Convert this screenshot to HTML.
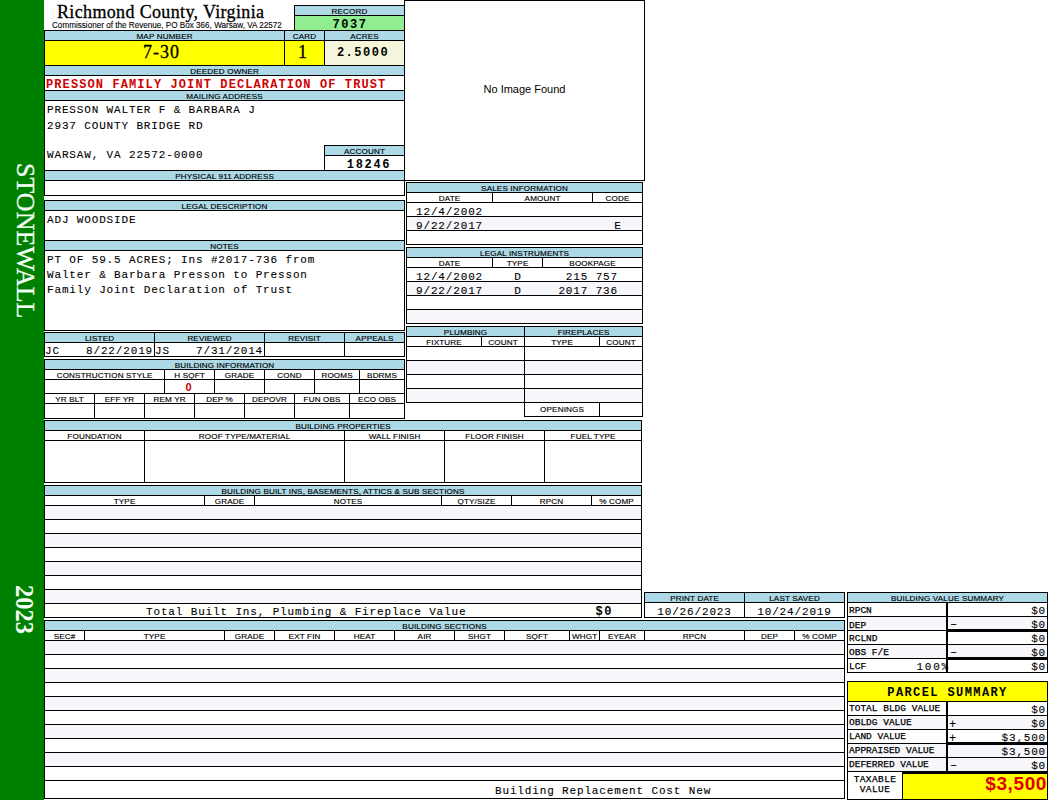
<!DOCTYPE html>
<html><head><meta charset="utf-8"><style>
html,body{margin:0;padding:0;background:#fff;width:1050px;height:800px;overflow:hidden}
#r{position:relative;width:1050px;height:800px;overflow:hidden}
#r div{position:absolute;box-sizing:border-box}
.vt{color:#f4fff4;font-family:"Liberation Serif", serif;white-space:pre}
</style></head><body><div id="r">
<div style="left:0px;top:0px;width:44px;height:800px;background:#008000"></div>
<div style="left:57px;top:2.92px;width:343px;height:18px;line-height:18px;font-family:'Liberation Serif', serif;font-size:18px;text-align:left;white-space:pre;color:#000;letter-spacing:0.35px;-webkit-text-stroke:0.3px #000">Richmond County, Virginia</div>
<div style="left:52px;top:22.10px;width:348px;height:8.15px;line-height:8.15px;font-family:'Liberation Sans', sans-serif;font-size:8.15px;text-align:left;white-space:pre;color:#000;-webkit-text-stroke:0.1px #000">Commissioner of the Revenue, PO Box 366, Warsaw, VA 22572</div>
<div style="left:295px;top:6px;width:109px;height:9px;background:#add8e6"></div>
<div style="left:295px;top:16px;width:109px;height:14px;background:#90ee90"></div>
<div style="left:294px;top:5px;width:111px;height:1px;background:#000"></div>
<div style="left:294px;top:15px;width:111px;height:1px;background:#000"></div>
<div style="left:294px;top:5px;width:1px;height:26px;background:#000"></div>
<div style="left:294px;top:7.54px;width:111px;height:8.1px;line-height:8.1px;font-family:'Liberation Sans', sans-serif;font-size:8.1px;text-align:center;white-space:pre;color:#000;letter-spacing:0.15px;-webkit-text-stroke:0.15px #000;text-indent:0.15px">RECORD</div>
<div style="left:295px;top:19.30px;width:110px;height:12px;line-height:12px;font-family:'Liberation Mono', monospace;font-size:12px;text-align:center;white-space:pre;color:#000;font-weight:bold;letter-spacing:1.6px">7037</div>
<div style="left:45px;top:31px;width:359px;height:9px;background:#add8e6"></div>
<div style="left:45px;top:41px;width:279px;height:24px;background:#ffff00"></div>
<div style="left:325px;top:41px;width:79px;height:24px;background:#f5f5dc"></div>
<div style="left:44px;top:30px;width:361px;height:1px;background:#000"></div>
<div style="left:44px;top:40px;width:361px;height:1px;background:#000"></div>
<div style="left:44px;top:65px;width:361px;height:1px;background:#000"></div>
<div style="left:284px;top:30px;width:1px;height:36px;background:#000"></div>
<div style="left:324px;top:30px;width:1px;height:36px;background:#000"></div>
<div style="left:44px;top:32.54px;width:241px;height:8.1px;line-height:8.1px;font-family:'Liberation Sans', sans-serif;font-size:8.1px;text-align:center;white-space:pre;color:#000;letter-spacing:0.15px;-webkit-text-stroke:0.15px #000;text-indent:0.15px">MAP NUMBER</div>
<div style="left:284px;top:32.54px;width:41px;height:8.1px;line-height:8.1px;font-family:'Liberation Sans', sans-serif;font-size:8.1px;text-align:center;white-space:pre;color:#000;letter-spacing:0.15px;-webkit-text-stroke:0.15px #000;text-indent:0.15px">CARD</div>
<div style="left:324px;top:32.54px;width:81px;height:8.1px;line-height:8.1px;font-family:'Liberation Sans', sans-serif;font-size:8.1px;text-align:center;white-space:pre;color:#000;letter-spacing:0.15px;-webkit-text-stroke:0.15px #000;text-indent:0.15px">ACRES</div>
<div style="left:41px;top:42.92px;width:241px;height:18px;line-height:18px;font-family:'Liberation Serif', serif;font-size:18px;text-align:center;white-space:pre;color:#000;letter-spacing:1px;-webkit-text-stroke:0.3px #000">7-30</div>
<div style="left:282px;top:42.92px;width:41px;height:18px;line-height:18px;font-family:'Liberation Serif', serif;font-size:18px;text-align:center;white-space:pre;color:#000;-webkit-text-stroke:0.3px #000">1</div>
<div style="left:323px;top:47.30px;width:80px;height:12px;line-height:12px;font-family:'Liberation Mono', monospace;font-size:12px;text-align:center;white-space:pre;color:#000;font-weight:bold;letter-spacing:1.5px">2.5000</div>
<div style="left:45px;top:66px;width:359px;height:9px;background:#add8e6"></div>
<div style="left:44px;top:75px;width:361px;height:1px;background:#000"></div>
<div style="left:44px;top:90px;width:361px;height:1px;background:#000"></div>
<div style="left:44px;top:67.54px;width:361px;height:8.1px;line-height:8.1px;font-family:'Liberation Sans', sans-serif;font-size:8.1px;text-align:center;white-space:pre;color:#000;letter-spacing:0.15px;-webkit-text-stroke:0.15px #000;text-indent:0.15px">DEEDED OWNER</div>
<div style="left:46px;top:79.30px;width:358px;height:12px;line-height:12px;font-family:'Liberation Mono', monospace;font-size:12px;text-align:left;white-space:pre;color:#d00000;font-weight:bold;letter-spacing:1.1px">PRESSON FAMILY JOINT DECLARATION OF TRUST</div>
<div style="left:45px;top:91px;width:359px;height:9px;background:#add8e6"></div>
<div style="left:44px;top:100px;width:361px;height:1px;background:#000"></div>
<div style="left:44px;top:92.54px;width:361px;height:8.1px;line-height:8.1px;font-family:'Liberation Sans', sans-serif;font-size:8.1px;text-align:center;white-space:pre;color:#000;letter-spacing:0.15px;-webkit-text-stroke:0.15px #000;text-indent:0.15px">MAILING ADDRESS</div>
<div style="left:47px;top:105.07px;width:600px;height:11px;line-height:11px;font-family:'Liberation Mono', monospace;font-size:11px;text-align:left;white-space:pre;color:#000;letter-spacing:0.85px;-webkit-text-stroke:0.1px #000">PRESSON WALTER F &amp; BARBARA J</div>
<div style="left:47px;top:120.57px;width:600px;height:11px;line-height:11px;font-family:'Liberation Mono', monospace;font-size:11px;text-align:left;white-space:pre;color:#000;letter-spacing:0.85px;-webkit-text-stroke:0.1px #000">2937 COUNTY BRIDGE RD</div>
<div style="left:47px;top:149.87px;width:600px;height:11px;line-height:11px;font-family:'Liberation Mono', monospace;font-size:11px;text-align:left;white-space:pre;color:#000;letter-spacing:0.85px;-webkit-text-stroke:0.1px #000">WARSAW, VA 22572-0000</div>
<div style="left:325px;top:146px;width:79px;height:9px;background:#add8e6"></div>
<div style="left:324px;top:145px;width:81px;height:1px;background:#000"></div>
<div style="left:324px;top:155px;width:81px;height:1px;background:#000"></div>
<div style="left:324px;top:145px;width:1px;height:26px;background:#000"></div>
<div style="left:324px;top:147.54px;width:81px;height:8.1px;line-height:8.1px;font-family:'Liberation Sans', sans-serif;font-size:8.1px;text-align:center;white-space:pre;color:#000;letter-spacing:0.15px;-webkit-text-stroke:0.15px #000;text-indent:0.15px">ACCOUNT</div>
<div style="left:329px;top:159.30px;width:80px;height:12px;line-height:12px;font-family:'Liberation Mono', monospace;font-size:12px;text-align:center;white-space:pre;color:#000;font-weight:bold;letter-spacing:1.7px">18246</div>
<div style="left:44px;top:170px;width:361px;height:1px;background:#000"></div>
<div style="left:45px;top:171px;width:359px;height:9px;background:#add8e6"></div>
<div style="left:44px;top:180px;width:361px;height:1px;background:#000"></div>
<div style="left:44px;top:195px;width:361px;height:1px;background:#000"></div>
<div style="left:44px;top:172.54px;width:361px;height:8.1px;line-height:8.1px;font-family:'Liberation Sans', sans-serif;font-size:8.1px;text-align:center;white-space:pre;color:#000;letter-spacing:0.15px;-webkit-text-stroke:0.15px #000;text-indent:0.15px">PHYSICAL 911 ADDRESS</div>
<div style="left:44px;top:30px;width:1px;height:166px;background:#000"></div>
<div style="left:404px;top:0px;width:1px;height:196px;background:#000"></div>
<div style="left:45px;top:201px;width:359px;height:9px;background:#add8e6"></div>
<div style="left:45px;top:241px;width:359px;height:9px;background:#add8e6"></div>
<div style="left:44px;top:200px;width:361px;height:1px;background:#000"></div>
<div style="left:44px;top:210px;width:361px;height:1px;background:#000"></div>
<div style="left:44px;top:240px;width:361px;height:1px;background:#000"></div>
<div style="left:44px;top:250px;width:361px;height:1px;background:#000"></div>
<div style="left:44px;top:330px;width:361px;height:1px;background:#000"></div>
<div style="left:44px;top:200px;width:1px;height:131px;background:#000"></div>
<div style="left:404px;top:200px;width:1px;height:131px;background:#000"></div>
<div style="left:44px;top:202.54px;width:361px;height:8.1px;line-height:8.1px;font-family:'Liberation Sans', sans-serif;font-size:8.1px;text-align:center;white-space:pre;color:#000;letter-spacing:0.15px;-webkit-text-stroke:0.15px #000;text-indent:0.15px">LEGAL DESCRIPTION</div>
<div style="left:44px;top:242.54px;width:361px;height:8.1px;line-height:8.1px;font-family:'Liberation Sans', sans-serif;font-size:8.1px;text-align:center;white-space:pre;color:#000;letter-spacing:0.15px;-webkit-text-stroke:0.15px #000;text-indent:0.15px">NOTES</div>
<div style="left:47px;top:214.57px;width:600px;height:11px;line-height:11px;font-family:'Liberation Mono', monospace;font-size:11px;text-align:left;white-space:pre;color:#000;letter-spacing:0.85px;-webkit-text-stroke:0.1px #000">ADJ WOODSIDE</div>
<div style="left:47px;top:254.57px;width:600px;height:11px;line-height:11px;font-family:'Liberation Mono', monospace;font-size:11px;text-align:left;white-space:pre;color:#000;letter-spacing:0.85px;-webkit-text-stroke:0.1px #000">PT OF 59.5 ACRES; Ins #2017-736 from</div>
<div style="left:47px;top:269.57px;width:600px;height:11px;line-height:11px;font-family:'Liberation Mono', monospace;font-size:11px;text-align:left;white-space:pre;color:#000;letter-spacing:0.85px;-webkit-text-stroke:0.1px #000">Walter &amp; Barbara Presson to Presson</div>
<div style="left:47px;top:284.57px;width:600px;height:11px;line-height:11px;font-family:'Liberation Mono', monospace;font-size:11px;text-align:left;white-space:pre;color:#000;letter-spacing:0.85px;-webkit-text-stroke:0.1px #000">Family Joint Declaration of Trust</div>
<div style="left:45px;top:333px;width:359px;height:9px;background:#add8e6"></div>
<div style="left:44px;top:332px;width:361px;height:1px;background:#000"></div>
<div style="left:44px;top:342px;width:361px;height:1px;background:#000"></div>
<div style="left:44px;top:356px;width:361px;height:1px;background:#000"></div>
<div style="left:44px;top:332px;width:1px;height:25px;background:#000"></div>
<div style="left:154px;top:332px;width:1px;height:25px;background:#000"></div>
<div style="left:264px;top:332px;width:1px;height:25px;background:#000"></div>
<div style="left:344px;top:332px;width:1px;height:25px;background:#000"></div>
<div style="left:404px;top:332px;width:1px;height:25px;background:#000"></div>
<div style="left:44px;top:334.54px;width:111px;height:8.1px;line-height:8.1px;font-family:'Liberation Sans', sans-serif;font-size:8.1px;text-align:center;white-space:pre;color:#000;letter-spacing:0.15px;-webkit-text-stroke:0.15px #000;text-indent:0.15px">LISTED</div>
<div style="left:154px;top:334.54px;width:111px;height:8.1px;line-height:8.1px;font-family:'Liberation Sans', sans-serif;font-size:8.1px;text-align:center;white-space:pre;color:#000;letter-spacing:0.15px;-webkit-text-stroke:0.15px #000;text-indent:0.15px">REVIEWED</div>
<div style="left:264px;top:334.54px;width:81px;height:8.1px;line-height:8.1px;font-family:'Liberation Sans', sans-serif;font-size:8.1px;text-align:center;white-space:pre;color:#000;letter-spacing:0.15px;-webkit-text-stroke:0.15px #000;text-indent:0.15px">REVISIT</div>
<div style="left:344px;top:334.54px;width:61px;height:8.1px;line-height:8.1px;font-family:'Liberation Sans', sans-serif;font-size:8.1px;text-align:center;white-space:pre;color:#000;letter-spacing:0.15px;-webkit-text-stroke:0.15px #000;text-indent:0.15px">APPEALS</div>
<div style="left:45px;top:346.07px;width:600px;height:11px;line-height:11px;font-family:'Liberation Mono', monospace;font-size:11px;text-align:left;white-space:pre;color:#000;letter-spacing:0.85px;-webkit-text-stroke:0.1px #000">JC</div>
<div style="left:86px;top:346.07px;width:600px;height:11px;line-height:11px;font-family:'Liberation Mono', monospace;font-size:11px;text-align:left;white-space:pre;color:#000;letter-spacing:0.85px;-webkit-text-stroke:0.1px #000">8/22/2019</div>
<div style="left:155px;top:346.07px;width:600px;height:11px;line-height:11px;font-family:'Liberation Mono', monospace;font-size:11px;text-align:left;white-space:pre;color:#000;letter-spacing:0.85px;-webkit-text-stroke:0.1px #000">JS</div>
<div style="left:196px;top:346.07px;width:600px;height:11px;line-height:11px;font-family:'Liberation Mono', monospace;font-size:11px;text-align:left;white-space:pre;color:#000;letter-spacing:0.85px;-webkit-text-stroke:0.1px #000">7/31/2014</div>
<div style="left:45px;top:360px;width:359px;height:9px;background:#add8e6"></div>
<div style="left:44px;top:359px;width:361px;height:1px;background:#000"></div>
<div style="left:44px;top:369px;width:361px;height:1px;background:#000"></div>
<div style="left:44px;top:379px;width:361px;height:1px;background:#000"></div>
<div style="left:44px;top:393px;width:361px;height:1px;background:#000"></div>
<div style="left:44px;top:403px;width:361px;height:1px;background:#000"></div>
<div style="left:44px;top:418px;width:361px;height:1px;background:#000"></div>
<div style="left:44px;top:359px;width:1px;height:60px;background:#000"></div>
<div style="left:404px;top:359px;width:1px;height:60px;background:#000"></div>
<div style="left:44px;top:361.54px;width:361px;height:8.1px;line-height:8.1px;font-family:'Liberation Sans', sans-serif;font-size:8.1px;text-align:center;white-space:pre;color:#000;letter-spacing:0.15px;-webkit-text-stroke:0.15px #000;text-indent:0.15px">BUILDING INFORMATION</div>
<div style="left:164px;top:369px;width:1px;height:25px;background:#000"></div>
<div style="left:214px;top:369px;width:1px;height:25px;background:#000"></div>
<div style="left:264px;top:369px;width:1px;height:25px;background:#000"></div>
<div style="left:314px;top:369px;width:1px;height:25px;background:#000"></div>
<div style="left:359px;top:369px;width:1px;height:25px;background:#000"></div>
<div style="left:44px;top:371.54px;width:121px;height:8.1px;line-height:8.1px;font-family:'Liberation Sans', sans-serif;font-size:8.1px;text-align:center;white-space:pre;color:#000;letter-spacing:0.15px;-webkit-text-stroke:0.15px #000;text-indent:0.15px">CONSTRUCTION STYLE</div>
<div style="left:164px;top:371.54px;width:51px;height:8.1px;line-height:8.1px;font-family:'Liberation Sans', sans-serif;font-size:8.1px;text-align:center;white-space:pre;color:#000;letter-spacing:0.15px;-webkit-text-stroke:0.15px #000;text-indent:0.15px">H SQFT</div>
<div style="left:214px;top:371.54px;width:51px;height:8.1px;line-height:8.1px;font-family:'Liberation Sans', sans-serif;font-size:8.1px;text-align:center;white-space:pre;color:#000;letter-spacing:0.15px;-webkit-text-stroke:0.15px #000;text-indent:0.15px">GRADE</div>
<div style="left:264px;top:371.54px;width:51px;height:8.1px;line-height:8.1px;font-family:'Liberation Sans', sans-serif;font-size:8.1px;text-align:center;white-space:pre;color:#000;letter-spacing:0.15px;-webkit-text-stroke:0.15px #000;text-indent:0.15px">COND</div>
<div style="left:314px;top:371.54px;width:46px;height:8.1px;line-height:8.1px;font-family:'Liberation Sans', sans-serif;font-size:8.1px;text-align:center;white-space:pre;color:#000;letter-spacing:0.15px;-webkit-text-stroke:0.15px #000;text-indent:0.15px">ROOMS</div>
<div style="left:359px;top:371.54px;width:46px;height:8.1px;line-height:8.1px;font-family:'Liberation Sans', sans-serif;font-size:8.1px;text-align:center;white-space:pre;color:#000;letter-spacing:0.15px;-webkit-text-stroke:0.15px #000;text-indent:0.15px">BDRMS</div>
<div style="left:163px;top:381.69px;width:51px;height:11px;line-height:11px;font-family:'Liberation Sans', sans-serif;font-size:11px;text-align:center;white-space:pre;color:#c00000;font-weight:bold">0</div>
<div style="left:94px;top:393px;width:1px;height:26px;background:#000"></div>
<div style="left:144px;top:393px;width:1px;height:26px;background:#000"></div>
<div style="left:194px;top:393px;width:1px;height:26px;background:#000"></div>
<div style="left:244px;top:393px;width:1px;height:26px;background:#000"></div>
<div style="left:294px;top:393px;width:1px;height:26px;background:#000"></div>
<div style="left:349px;top:393px;width:1px;height:26px;background:#000"></div>
<div style="left:44px;top:395.54px;width:51px;height:8.1px;line-height:8.1px;font-family:'Liberation Sans', sans-serif;font-size:8.1px;text-align:center;white-space:pre;color:#000;letter-spacing:0.15px;-webkit-text-stroke:0.15px #000;text-indent:0.15px">YR BLT</div>
<div style="left:94px;top:395.54px;width:51px;height:8.1px;line-height:8.1px;font-family:'Liberation Sans', sans-serif;font-size:8.1px;text-align:center;white-space:pre;color:#000;letter-spacing:0.15px;-webkit-text-stroke:0.15px #000;text-indent:0.15px">EFF YR</div>
<div style="left:144px;top:395.54px;width:51px;height:8.1px;line-height:8.1px;font-family:'Liberation Sans', sans-serif;font-size:8.1px;text-align:center;white-space:pre;color:#000;letter-spacing:0.15px;-webkit-text-stroke:0.15px #000;text-indent:0.15px">REM YR</div>
<div style="left:194px;top:395.54px;width:51px;height:8.1px;line-height:8.1px;font-family:'Liberation Sans', sans-serif;font-size:8.1px;text-align:center;white-space:pre;color:#000;letter-spacing:0.15px;-webkit-text-stroke:0.15px #000;text-indent:0.15px">DEP %</div>
<div style="left:244px;top:395.54px;width:51px;height:8.1px;line-height:8.1px;font-family:'Liberation Sans', sans-serif;font-size:8.1px;text-align:center;white-space:pre;color:#000;letter-spacing:0.15px;-webkit-text-stroke:0.15px #000;text-indent:0.15px">DEPOVR</div>
<div style="left:294px;top:395.54px;width:56px;height:8.1px;line-height:8.1px;font-family:'Liberation Sans', sans-serif;font-size:8.1px;text-align:center;white-space:pre;color:#000;letter-spacing:0.15px;-webkit-text-stroke:0.15px #000;text-indent:0.15px">FUN OBS</div>
<div style="left:349px;top:395.54px;width:56px;height:8.1px;line-height:8.1px;font-family:'Liberation Sans', sans-serif;font-size:8.1px;text-align:center;white-space:pre;color:#000;letter-spacing:0.15px;-webkit-text-stroke:0.15px #000;text-indent:0.15px">ECO OBS</div>
<div style="left:404px;top:0px;width:241px;height:1px;background:#000"></div>
<div style="left:404px;top:180px;width:241px;height:1px;background:#000"></div>
<div style="left:644px;top:0px;width:1px;height:181px;background:#000"></div>
<div style="left:404px;top:84.19px;width:241px;height:11px;line-height:11px;font-family:'Liberation Sans', sans-serif;font-size:11px;text-align:center;white-space:pre;color:#000">No Image Found</div>
<div style="left:407px;top:183px;width:235px;height:9px;background:#add8e6"></div>
<div style="left:407px;top:217px;width:235px;height:13px;background:#f6f6fb"></div>
<div style="left:406px;top:182px;width:237px;height:1px;background:#000"></div>
<div style="left:406px;top:192px;width:237px;height:1px;background:#000"></div>
<div style="left:406px;top:202px;width:237px;height:1px;background:#000"></div>
<div style="left:406px;top:216px;width:237px;height:1px;background:#000"></div>
<div style="left:406px;top:230px;width:237px;height:1px;background:#000"></div>
<div style="left:406px;top:244px;width:237px;height:1px;background:#000"></div>
<div style="left:406px;top:182px;width:1px;height:63px;background:#000"></div>
<div style="left:642px;top:182px;width:1px;height:63px;background:#000"></div>
<div style="left:492px;top:192px;width:1px;height:11px;background:#000"></div>
<div style="left:592px;top:192px;width:1px;height:11px;background:#000"></div>
<div style="left:406px;top:184.54px;width:237px;height:8.1px;line-height:8.1px;font-family:'Liberation Sans', sans-serif;font-size:8.1px;text-align:center;white-space:pre;color:#000;letter-spacing:0.15px;-webkit-text-stroke:0.15px #000;text-indent:0.15px">SALES INFORMATION</div>
<div style="left:406px;top:194.54px;width:87px;height:8.1px;line-height:8.1px;font-family:'Liberation Sans', sans-serif;font-size:8.1px;text-align:center;white-space:pre;color:#000;letter-spacing:0.15px;-webkit-text-stroke:0.15px #000;text-indent:0.15px">DATE</div>
<div style="left:492px;top:194.54px;width:101px;height:8.1px;line-height:8.1px;font-family:'Liberation Sans', sans-serif;font-size:8.1px;text-align:center;white-space:pre;color:#000;letter-spacing:0.15px;-webkit-text-stroke:0.15px #000;text-indent:0.15px">AMOUNT</div>
<div style="left:592px;top:194.54px;width:51px;height:8.1px;line-height:8.1px;font-family:'Liberation Sans', sans-serif;font-size:8.1px;text-align:center;white-space:pre;color:#000;letter-spacing:0.15px;-webkit-text-stroke:0.15px #000;text-indent:0.15px">CODE</div>
<div style="left:416px;top:206.57px;width:600px;height:11px;line-height:11px;font-family:'Liberation Mono', monospace;font-size:11px;text-align:left;white-space:pre;color:#000;letter-spacing:0.85px;-webkit-text-stroke:0.1px #000">12/4/2002</div>
<div style="left:416px;top:220.57px;width:600px;height:11px;line-height:11px;font-family:'Liberation Mono', monospace;font-size:11px;text-align:left;white-space:pre;color:#000;letter-spacing:0.85px;-webkit-text-stroke:0.1px #000">9/22/2017</div>
<div style="left:592px;top:220.57px;width:51px;height:11px;line-height:11px;font-family:'Liberation Mono', monospace;font-size:11px;text-align:center;white-space:pre;color:#000;-webkit-text-stroke:0.1px #000">E</div>
<div style="left:407px;top:248px;width:235px;height:9px;background:#add8e6"></div>
<div style="left:407px;top:282px;width:235px;height:13px;background:#f6f6fb"></div>
<div style="left:407px;top:310px;width:235px;height:13px;background:#f6f6fb"></div>
<div style="left:406px;top:247px;width:237px;height:1px;background:#000"></div>
<div style="left:406px;top:257px;width:237px;height:1px;background:#000"></div>
<div style="left:406px;top:267px;width:237px;height:1px;background:#000"></div>
<div style="left:406px;top:281px;width:237px;height:1px;background:#000"></div>
<div style="left:406px;top:295px;width:237px;height:1px;background:#000"></div>
<div style="left:406px;top:309px;width:237px;height:1px;background:#000"></div>
<div style="left:406px;top:323px;width:237px;height:1px;background:#000"></div>
<div style="left:406px;top:247px;width:1px;height:77px;background:#000"></div>
<div style="left:642px;top:247px;width:1px;height:77px;background:#000"></div>
<div style="left:492px;top:257px;width:1px;height:11px;background:#000"></div>
<div style="left:542px;top:257px;width:1px;height:11px;background:#000"></div>
<div style="left:406px;top:249.54px;width:237px;height:8.1px;line-height:8.1px;font-family:'Liberation Sans', sans-serif;font-size:8.1px;text-align:center;white-space:pre;color:#000;letter-spacing:0.15px;-webkit-text-stroke:0.15px #000;text-indent:0.15px">LEGAL INSTRUMENTS</div>
<div style="left:406px;top:259.54px;width:87px;height:8.1px;line-height:8.1px;font-family:'Liberation Sans', sans-serif;font-size:8.1px;text-align:center;white-space:pre;color:#000;letter-spacing:0.15px;-webkit-text-stroke:0.15px #000;text-indent:0.15px">DATE</div>
<div style="left:492px;top:259.54px;width:51px;height:8.1px;line-height:8.1px;font-family:'Liberation Sans', sans-serif;font-size:8.1px;text-align:center;white-space:pre;color:#000;letter-spacing:0.15px;-webkit-text-stroke:0.15px #000;text-indent:0.15px">TYPE</div>
<div style="left:542px;top:259.54px;width:101px;height:8.1px;line-height:8.1px;font-family:'Liberation Sans', sans-serif;font-size:8.1px;text-align:center;white-space:pre;color:#000;letter-spacing:0.15px;-webkit-text-stroke:0.15px #000;text-indent:0.15px">BOOKPAGE</div>
<div style="left:416px;top:271.57px;width:600px;height:11px;line-height:11px;font-family:'Liberation Mono', monospace;font-size:11px;text-align:left;white-space:pre;color:#000;letter-spacing:0.85px;-webkit-text-stroke:0.1px #000">12/4/2002</div>
<div style="left:416px;top:285.57px;width:600px;height:11px;line-height:11px;font-family:'Liberation Mono', monospace;font-size:11px;text-align:left;white-space:pre;color:#000;letter-spacing:0.85px;-webkit-text-stroke:0.1px #000">9/22/2017</div>
<div style="left:492px;top:271.57px;width:51px;height:11px;line-height:11px;font-family:'Liberation Mono', monospace;font-size:11px;text-align:center;white-space:pre;color:#000;-webkit-text-stroke:0.1px #000">D</div>
<div style="left:492px;top:285.57px;width:51px;height:11px;line-height:11px;font-family:'Liberation Mono', monospace;font-size:11px;text-align:center;white-space:pre;color:#000;-webkit-text-stroke:0.1px #000">D</div>
<div style="left:542px;top:271.57px;width:76px;height:11px;line-height:11px;font-family:'Liberation Mono', monospace;font-size:11px;text-align:right;white-space:pre;color:#000;letter-spacing:0.85px;-webkit-text-stroke:0.1px #000">215 757</div>
<div style="left:542px;top:285.57px;width:76px;height:11px;line-height:11px;font-family:'Liberation Mono', monospace;font-size:11px;text-align:right;white-space:pre;color:#000;letter-spacing:0.85px;-webkit-text-stroke:0.1px #000">2017 736</div>
<div style="left:407px;top:327px;width:235px;height:9px;background:#add8e6"></div>
<div style="left:407px;top:361px;width:235px;height:13px;background:#f6f6fb"></div>
<div style="left:407px;top:389px;width:235px;height:13px;background:#f6f6fb"></div>
<div style="left:406px;top:326px;width:237px;height:1px;background:#000"></div>
<div style="left:406px;top:336px;width:237px;height:1px;background:#000"></div>
<div style="left:406px;top:346px;width:237px;height:1px;background:#000"></div>
<div style="left:406px;top:360px;width:237px;height:1px;background:#000"></div>
<div style="left:406px;top:374px;width:237px;height:1px;background:#000"></div>
<div style="left:406px;top:388px;width:237px;height:1px;background:#000"></div>
<div style="left:406px;top:402px;width:237px;height:1px;background:#000"></div>
<div style="left:524px;top:416px;width:119px;height:1px;background:#000"></div>
<div style="left:406px;top:326px;width:1px;height:77px;background:#000"></div>
<div style="left:524px;top:326px;width:1px;height:91px;background:#000"></div>
<div style="left:642px;top:326px;width:1px;height:91px;background:#000"></div>
<div style="left:481px;top:336px;width:1px;height:11px;background:#000"></div>
<div style="left:599px;top:336px;width:1px;height:11px;background:#000"></div>
<div style="left:599px;top:402px;width:1px;height:15px;background:#000"></div>
<div style="left:406px;top:328.54px;width:119px;height:8.1px;line-height:8.1px;font-family:'Liberation Sans', sans-serif;font-size:8.1px;text-align:center;white-space:pre;color:#000;letter-spacing:0.15px;-webkit-text-stroke:0.15px #000;text-indent:0.15px">PLUMBING</div>
<div style="left:524px;top:328.54px;width:119px;height:8.1px;line-height:8.1px;font-family:'Liberation Sans', sans-serif;font-size:8.1px;text-align:center;white-space:pre;color:#000;letter-spacing:0.15px;-webkit-text-stroke:0.15px #000;text-indent:0.15px">FIREPLACES</div>
<div style="left:406px;top:338.54px;width:76px;height:8.1px;line-height:8.1px;font-family:'Liberation Sans', sans-serif;font-size:8.1px;text-align:center;white-space:pre;color:#000;letter-spacing:0.15px;-webkit-text-stroke:0.15px #000;text-indent:0.15px">FIXTURE</div>
<div style="left:481px;top:338.54px;width:44px;height:8.1px;line-height:8.1px;font-family:'Liberation Sans', sans-serif;font-size:8.1px;text-align:center;white-space:pre;color:#000;letter-spacing:0.15px;-webkit-text-stroke:0.15px #000;text-indent:0.15px">COUNT</div>
<div style="left:524px;top:338.54px;width:76px;height:8.1px;line-height:8.1px;font-family:'Liberation Sans', sans-serif;font-size:8.1px;text-align:center;white-space:pre;color:#000;letter-spacing:0.15px;-webkit-text-stroke:0.15px #000;text-indent:0.15px">TYPE</div>
<div style="left:599px;top:338.54px;width:44px;height:8.1px;line-height:8.1px;font-family:'Liberation Sans', sans-serif;font-size:8.1px;text-align:center;white-space:pre;color:#000;letter-spacing:0.15px;-webkit-text-stroke:0.15px #000;text-indent:0.15px">COUNT</div>
<div style="left:524px;top:405.54px;width:76px;height:8.1px;line-height:8.1px;font-family:'Liberation Sans', sans-serif;font-size:8.1px;text-align:center;white-space:pre;color:#000;letter-spacing:0.15px;-webkit-text-stroke:0.15px #000;text-indent:0.15px">OPENINGS</div>
<div style="left:45px;top:421px;width:596px;height:9px;background:#add8e6"></div>
<div style="left:44px;top:420px;width:598px;height:1px;background:#000"></div>
<div style="left:44px;top:430px;width:598px;height:1px;background:#000"></div>
<div style="left:44px;top:440px;width:598px;height:1px;background:#000"></div>
<div style="left:44px;top:482px;width:598px;height:1px;background:#000"></div>
<div style="left:44px;top:420px;width:1px;height:63px;background:#000"></div>
<div style="left:641px;top:420px;width:1px;height:63px;background:#000"></div>
<div style="left:44px;top:422.54px;width:598px;height:8.1px;line-height:8.1px;font-family:'Liberation Sans', sans-serif;font-size:8.1px;text-align:center;white-space:pre;color:#000;letter-spacing:0.15px;-webkit-text-stroke:0.15px #000;text-indent:0.15px">BUILDING PROPERTIES</div>
<div style="left:144px;top:430px;width:1px;height:53px;background:#000"></div>
<div style="left:344px;top:430px;width:1px;height:53px;background:#000"></div>
<div style="left:444px;top:430px;width:1px;height:53px;background:#000"></div>
<div style="left:544px;top:430px;width:1px;height:53px;background:#000"></div>
<div style="left:44px;top:432.54px;width:101px;height:8.1px;line-height:8.1px;font-family:'Liberation Sans', sans-serif;font-size:8.1px;text-align:center;white-space:pre;color:#000;letter-spacing:0.15px;-webkit-text-stroke:0.15px #000;text-indent:0.15px">FOUNDATION</div>
<div style="left:144px;top:432.54px;width:201px;height:8.1px;line-height:8.1px;font-family:'Liberation Sans', sans-serif;font-size:8.1px;text-align:center;white-space:pre;color:#000;letter-spacing:0.15px;-webkit-text-stroke:0.15px #000;text-indent:0.15px">ROOF TYPE/MATERIAL</div>
<div style="left:344px;top:432.54px;width:101px;height:8.1px;line-height:8.1px;font-family:'Liberation Sans', sans-serif;font-size:8.1px;text-align:center;white-space:pre;color:#000;letter-spacing:0.15px;-webkit-text-stroke:0.15px #000;text-indent:0.15px">WALL FINISH</div>
<div style="left:444px;top:432.54px;width:101px;height:8.1px;line-height:8.1px;font-family:'Liberation Sans', sans-serif;font-size:8.1px;text-align:center;white-space:pre;color:#000;letter-spacing:0.15px;-webkit-text-stroke:0.15px #000;text-indent:0.15px">FLOOR FINISH</div>
<div style="left:544px;top:432.54px;width:98px;height:8.1px;line-height:8.1px;font-family:'Liberation Sans', sans-serif;font-size:8.1px;text-align:center;white-space:pre;color:#000;letter-spacing:0.15px;-webkit-text-stroke:0.15px #000;text-indent:0.15px">FUEL TYPE</div>
<div style="left:45px;top:486px;width:596px;height:9px;background:#add8e6"></div>
<div style="left:45px;top:506px;width:596px;height:13px;background:#f6f6fb"></div>
<div style="left:45px;top:534px;width:596px;height:13px;background:#f6f6fb"></div>
<div style="left:45px;top:562px;width:596px;height:13px;background:#f6f6fb"></div>
<div style="left:45px;top:590px;width:596px;height:13px;background:#f6f6fb"></div>
<div style="left:45px;top:604px;width:596px;height:13px;background:#fffffc"></div>
<div style="left:44px;top:485px;width:598px;height:1px;background:#000"></div>
<div style="left:44px;top:495px;width:598px;height:1px;background:#000"></div>
<div style="left:44px;top:505px;width:598px;height:1px;background:#000"></div>
<div style="left:44px;top:519px;width:598px;height:1px;background:#000"></div>
<div style="left:44px;top:533px;width:598px;height:1px;background:#000"></div>
<div style="left:44px;top:547px;width:598px;height:1px;background:#000"></div>
<div style="left:44px;top:561px;width:598px;height:1px;background:#000"></div>
<div style="left:44px;top:575px;width:598px;height:1px;background:#000"></div>
<div style="left:44px;top:589px;width:598px;height:1px;background:#000"></div>
<div style="left:44px;top:603px;width:598px;height:1px;background:#000"></div>
<div style="left:44px;top:617px;width:598px;height:1px;background:#000"></div>
<div style="left:44px;top:485px;width:1px;height:133px;background:#000"></div>
<div style="left:641px;top:485px;width:1px;height:133px;background:#000"></div>
<div style="left:44px;top:487.54px;width:598px;height:8.1px;line-height:8.1px;font-family:'Liberation Sans', sans-serif;font-size:8.1px;text-align:center;white-space:pre;color:#000;letter-spacing:0.15px;-webkit-text-stroke:0.15px #000;text-indent:0.15px">BUILDING BUILT INS, BASEMENTS, ATTICS &amp; SUB SECTIONS</div>
<div style="left:204px;top:495px;width:1px;height:11px;background:#000"></div>
<div style="left:254px;top:495px;width:1px;height:11px;background:#000"></div>
<div style="left:441px;top:495px;width:1px;height:11px;background:#000"></div>
<div style="left:511px;top:495px;width:1px;height:11px;background:#000"></div>
<div style="left:591px;top:495px;width:1px;height:11px;background:#000"></div>
<div style="left:44px;top:497.54px;width:161px;height:8.1px;line-height:8.1px;font-family:'Liberation Sans', sans-serif;font-size:8.1px;text-align:center;white-space:pre;color:#000;letter-spacing:0.15px;-webkit-text-stroke:0.15px #000;text-indent:0.15px">TYPE</div>
<div style="left:204px;top:497.54px;width:51px;height:8.1px;line-height:8.1px;font-family:'Liberation Sans', sans-serif;font-size:8.1px;text-align:center;white-space:pre;color:#000;letter-spacing:0.15px;-webkit-text-stroke:0.15px #000;text-indent:0.15px">GRADE</div>
<div style="left:254px;top:497.54px;width:188px;height:8.1px;line-height:8.1px;font-family:'Liberation Sans', sans-serif;font-size:8.1px;text-align:center;white-space:pre;color:#000;letter-spacing:0.15px;-webkit-text-stroke:0.15px #000;text-indent:0.15px">NOTES</div>
<div style="left:441px;top:497.54px;width:71px;height:8.1px;line-height:8.1px;font-family:'Liberation Sans', sans-serif;font-size:8.1px;text-align:center;white-space:pre;color:#000;letter-spacing:0.15px;-webkit-text-stroke:0.15px #000;text-indent:0.15px">QTY/SIZE</div>
<div style="left:511px;top:497.54px;width:81px;height:8.1px;line-height:8.1px;font-family:'Liberation Sans', sans-serif;font-size:8.1px;text-align:center;white-space:pre;color:#000;letter-spacing:0.15px;-webkit-text-stroke:0.15px #000;text-indent:0.15px">RPCN</div>
<div style="left:591px;top:497.54px;width:51px;height:8.1px;line-height:8.1px;font-family:'Liberation Sans', sans-serif;font-size:8.1px;text-align:center;white-space:pre;color:#000;letter-spacing:0.15px;-webkit-text-stroke:0.15px #000;text-indent:0.15px">% COMP</div>
<div style="left:146px;top:606.57px;width:600px;height:11px;line-height:11px;font-family:'Liberation Mono', monospace;font-size:11px;text-align:left;white-space:pre;color:#000;letter-spacing:0.85px;-webkit-text-stroke:0.1px #000">Total Built Ins, Plumbing &amp; Fireplace Value</div>
<div style="left:560px;top:605.80px;width:53px;height:12px;line-height:12px;font-family:'Liberation Mono', monospace;font-size:12px;text-align:right;white-space:pre;color:#000;font-weight:bold;letter-spacing:1.5px">$0</div>
<div style="left:645px;top:593px;width:199px;height:9px;background:#add8e6"></div>
<div style="left:644px;top:592px;width:201px;height:1px;background:#000"></div>
<div style="left:644px;top:602px;width:201px;height:1px;background:#000"></div>
<div style="left:644px;top:617px;width:201px;height:1px;background:#000"></div>
<div style="left:644px;top:592px;width:1px;height:26px;background:#000"></div>
<div style="left:744px;top:592px;width:1px;height:26px;background:#000"></div>
<div style="left:844px;top:592px;width:1px;height:26px;background:#000"></div>
<div style="left:644px;top:594.54px;width:101px;height:8.1px;line-height:8.1px;font-family:'Liberation Sans', sans-serif;font-size:8.1px;text-align:center;white-space:pre;color:#000;letter-spacing:0.15px;-webkit-text-stroke:0.15px #000;text-indent:0.15px">PRINT DATE</div>
<div style="left:744px;top:594.54px;width:101px;height:8.1px;line-height:8.1px;font-family:'Liberation Sans', sans-serif;font-size:8.1px;text-align:center;white-space:pre;color:#000;letter-spacing:0.15px;-webkit-text-stroke:0.15px #000;text-indent:0.15px">LAST SAVED</div>
<div style="left:644px;top:607.07px;width:101px;height:11px;line-height:11px;font-family:'Liberation Mono', monospace;font-size:11px;text-align:center;white-space:pre;color:#000;letter-spacing:0.85px;-webkit-text-stroke:0.1px #000">10/26/2023</div>
<div style="left:744px;top:607.07px;width:101px;height:11px;line-height:11px;font-family:'Liberation Mono', monospace;font-size:11px;text-align:center;white-space:pre;color:#000;letter-spacing:0.85px;-webkit-text-stroke:0.1px #000">10/24/2019</div>
<div style="left:45px;top:621px;width:799px;height:9px;background:#add8e6"></div>
<div style="left:45px;top:641px;width:799px;height:13px;background:#f6f6fb"></div>
<div style="left:45px;top:669px;width:799px;height:13px;background:#f6f6fb"></div>
<div style="left:45px;top:697px;width:799px;height:13px;background:#f6f6fb"></div>
<div style="left:45px;top:725px;width:799px;height:13px;background:#f6f6fb"></div>
<div style="left:45px;top:753px;width:799px;height:13px;background:#f6f6fb"></div>
<div style="left:44px;top:620px;width:801px;height:1px;background:#000"></div>
<div style="left:44px;top:630px;width:801px;height:1px;background:#000"></div>
<div style="left:44px;top:640px;width:801px;height:1px;background:#000"></div>
<div style="left:44px;top:654px;width:801px;height:1px;background:#000"></div>
<div style="left:44px;top:668px;width:801px;height:1px;background:#000"></div>
<div style="left:44px;top:682px;width:801px;height:1px;background:#000"></div>
<div style="left:44px;top:696px;width:801px;height:1px;background:#000"></div>
<div style="left:44px;top:710px;width:801px;height:1px;background:#000"></div>
<div style="left:44px;top:724px;width:801px;height:1px;background:#000"></div>
<div style="left:44px;top:738px;width:801px;height:1px;background:#000"></div>
<div style="left:44px;top:752px;width:801px;height:1px;background:#000"></div>
<div style="left:44px;top:766px;width:801px;height:1px;background:#000"></div>
<div style="left:44px;top:780px;width:801px;height:1px;background:#000"></div>
<div style="left:44px;top:798px;width:801px;height:1px;background:#000"></div>
<div style="left:44px;top:620px;width:1px;height:179px;background:#000"></div>
<div style="left:844px;top:620px;width:1px;height:179px;background:#000"></div>
<div style="left:44px;top:622.54px;width:801px;height:8.1px;line-height:8.1px;font-family:'Liberation Sans', sans-serif;font-size:8.1px;text-align:center;white-space:pre;color:#000;letter-spacing:0.15px;-webkit-text-stroke:0.15px #000;text-indent:0.15px">BUILDING SECTIONS</div>
<div style="left:84px;top:630px;width:1px;height:11px;background:#000"></div>
<div style="left:224px;top:630px;width:1px;height:11px;background:#000"></div>
<div style="left:274px;top:630px;width:1px;height:11px;background:#000"></div>
<div style="left:334px;top:630px;width:1px;height:11px;background:#000"></div>
<div style="left:394px;top:630px;width:1px;height:11px;background:#000"></div>
<div style="left:454px;top:630px;width:1px;height:11px;background:#000"></div>
<div style="left:504px;top:630px;width:1px;height:11px;background:#000"></div>
<div style="left:569px;top:630px;width:1px;height:11px;background:#000"></div>
<div style="left:599px;top:630px;width:1px;height:11px;background:#000"></div>
<div style="left:644px;top:630px;width:1px;height:11px;background:#000"></div>
<div style="left:744px;top:630px;width:1px;height:11px;background:#000"></div>
<div style="left:794px;top:630px;width:1px;height:11px;background:#000"></div>
<div style="left:44px;top:632.54px;width:41px;height:8.1px;line-height:8.1px;font-family:'Liberation Sans', sans-serif;font-size:8.1px;text-align:center;white-space:pre;color:#000;letter-spacing:0.15px;-webkit-text-stroke:0.15px #000;text-indent:0.15px">SEC#</div>
<div style="left:84px;top:632.54px;width:141px;height:8.1px;line-height:8.1px;font-family:'Liberation Sans', sans-serif;font-size:8.1px;text-align:center;white-space:pre;color:#000;letter-spacing:0.15px;-webkit-text-stroke:0.15px #000;text-indent:0.15px">TYPE</div>
<div style="left:224px;top:632.54px;width:51px;height:8.1px;line-height:8.1px;font-family:'Liberation Sans', sans-serif;font-size:8.1px;text-align:center;white-space:pre;color:#000;letter-spacing:0.15px;-webkit-text-stroke:0.15px #000;text-indent:0.15px">GRADE</div>
<div style="left:274px;top:632.54px;width:61px;height:8.1px;line-height:8.1px;font-family:'Liberation Sans', sans-serif;font-size:8.1px;text-align:center;white-space:pre;color:#000;letter-spacing:0.15px;-webkit-text-stroke:0.15px #000;text-indent:0.15px">EXT FIN</div>
<div style="left:334px;top:632.54px;width:61px;height:8.1px;line-height:8.1px;font-family:'Liberation Sans', sans-serif;font-size:8.1px;text-align:center;white-space:pre;color:#000;letter-spacing:0.15px;-webkit-text-stroke:0.15px #000;text-indent:0.15px">HEAT</div>
<div style="left:394px;top:632.54px;width:61px;height:8.1px;line-height:8.1px;font-family:'Liberation Sans', sans-serif;font-size:8.1px;text-align:center;white-space:pre;color:#000;letter-spacing:0.15px;-webkit-text-stroke:0.15px #000;text-indent:0.15px">AIR</div>
<div style="left:454px;top:632.54px;width:51px;height:8.1px;line-height:8.1px;font-family:'Liberation Sans', sans-serif;font-size:8.1px;text-align:center;white-space:pre;color:#000;letter-spacing:0.15px;-webkit-text-stroke:0.15px #000;text-indent:0.15px">SHGT</div>
<div style="left:504px;top:632.54px;width:66px;height:8.1px;line-height:8.1px;font-family:'Liberation Sans', sans-serif;font-size:8.1px;text-align:center;white-space:pre;color:#000;letter-spacing:0.15px;-webkit-text-stroke:0.15px #000;text-indent:0.15px">SQFT</div>
<div style="left:569px;top:632.54px;width:31px;height:8.1px;line-height:8.1px;font-family:'Liberation Sans', sans-serif;font-size:8.1px;text-align:center;white-space:pre;color:#000;letter-spacing:0.15px;-webkit-text-stroke:0.15px #000;text-indent:0.15px">WHGT</div>
<div style="left:599px;top:632.54px;width:46px;height:8.1px;line-height:8.1px;font-family:'Liberation Sans', sans-serif;font-size:8.1px;text-align:center;white-space:pre;color:#000;letter-spacing:0.15px;-webkit-text-stroke:0.15px #000;text-indent:0.15px">EYEAR</div>
<div style="left:644px;top:632.54px;width:101px;height:8.1px;line-height:8.1px;font-family:'Liberation Sans', sans-serif;font-size:8.1px;text-align:center;white-space:pre;color:#000;letter-spacing:0.15px;-webkit-text-stroke:0.15px #000;text-indent:0.15px">RPCN</div>
<div style="left:744px;top:632.54px;width:51px;height:8.1px;line-height:8.1px;font-family:'Liberation Sans', sans-serif;font-size:8.1px;text-align:center;white-space:pre;color:#000;letter-spacing:0.15px;-webkit-text-stroke:0.15px #000;text-indent:0.15px">DEP</div>
<div style="left:794px;top:632.54px;width:51px;height:8.1px;line-height:8.1px;font-family:'Liberation Sans', sans-serif;font-size:8.1px;text-align:center;white-space:pre;color:#000;letter-spacing:0.15px;-webkit-text-stroke:0.15px #000;text-indent:0.15px">% COMP</div>
<div style="left:495px;top:785.87px;width:600px;height:11px;line-height:11px;font-family:'Liberation Mono', monospace;font-size:11px;text-align:left;white-space:pre;color:#000;letter-spacing:0.85px;-webkit-text-stroke:0.1px #000">Building Replacement Cost New</div>
<div style="left:848px;top:593px;width:199px;height:9px;background:#add8e6"></div>
<div style="left:848px;top:617px;width:199px;height:13px;background:#f6f6fb"></div>
<div style="left:848px;top:645px;width:199px;height:13px;background:#f6f6fb"></div>
<div style="left:847px;top:592px;width:201px;height:1px;background:#000"></div>
<div style="left:847px;top:602px;width:201px;height:1px;background:#000"></div>
<div style="left:847px;top:616px;width:201px;height:1px;background:#000"></div>
<div style="left:847px;top:630px;width:201px;height:1px;background:#000"></div>
<div style="left:847px;top:644px;width:201px;height:1px;background:#000"></div>
<div style="left:847px;top:658px;width:201px;height:1px;background:#000"></div>
<div style="left:847px;top:672px;width:201px;height:1px;background:#000"></div>
<div style="left:948px;top:629px;width:100px;height:3px;background:#000"></div>
<div style="left:948px;top:657px;width:100px;height:3px;background:#000"></div>
<div style="left:847px;top:592px;width:1px;height:81px;background:#000"></div>
<div style="left:1047px;top:592px;width:1px;height:81px;background:#000"></div>
<div style="left:946px;top:602px;width:2px;height:71px;background:#000"></div>
<div style="left:847px;top:594.54px;width:201px;height:8.1px;line-height:8.1px;font-family:'Liberation Sans', sans-serif;font-size:8.1px;text-align:center;white-space:pre;color:#000;letter-spacing:0.15px;-webkit-text-stroke:0.15px #000;text-indent:0.15px">BUILDING VALUE SUMMARY</div>
<div style="left:849px;top:606.12px;width:200px;height:9.5px;line-height:9.5px;font-family:'Liberation Mono', monospace;font-size:9.5px;text-align:left;white-space:pre;color:#000;-webkit-text-stroke:0.25px #000">RPCN</div>
<div style="left:849px;top:620.72px;width:200px;height:9.5px;line-height:9.5px;font-family:'Liberation Mono', monospace;font-size:9.5px;text-align:left;white-space:pre;color:#000;-webkit-text-stroke:0.25px #000">DEP</div>
<div style="left:849px;top:634.12px;width:200px;height:9.5px;line-height:9.5px;font-family:'Liberation Mono', monospace;font-size:9.5px;text-align:left;white-space:pre;color:#000;-webkit-text-stroke:0.25px #000">RCLND</div>
<div style="left:849px;top:648.12px;width:200px;height:9.5px;line-height:9.5px;font-family:'Liberation Mono', monospace;font-size:9.5px;text-align:left;white-space:pre;color:#000;-webkit-text-stroke:0.25px #000">OBS F/E</div>
<div style="left:849px;top:662.12px;width:200px;height:9.5px;line-height:9.5px;font-family:'Liberation Mono', monospace;font-size:9.5px;text-align:left;white-space:pre;color:#000;-webkit-text-stroke:0.25px #000">LCF</div>
<div style="left:848px;top:662.07px;width:102px;height:11px;line-height:11px;font-family:'Liberation Mono', monospace;font-size:11px;text-align:right;white-space:pre;color:#000;letter-spacing:1.8px;-webkit-text-stroke:0.1px #000">100%</div>
<div style="left:948px;top:605.57px;width:98px;height:11px;line-height:11px;font-family:'Liberation Mono', monospace;font-size:11px;text-align:right;white-space:pre;color:#000;letter-spacing:0.8px;-webkit-text-stroke:0.1px #000">$0</div>
<div style="left:948px;top:619.57px;width:98px;height:11px;line-height:11px;font-family:'Liberation Mono', monospace;font-size:11px;text-align:right;white-space:pre;color:#000;letter-spacing:0.8px;-webkit-text-stroke:0.1px #000">$0</div>
<div style="left:948px;top:633.57px;width:98px;height:11px;line-height:11px;font-family:'Liberation Mono', monospace;font-size:11px;text-align:right;white-space:pre;color:#000;letter-spacing:0.8px;-webkit-text-stroke:0.1px #000">$0</div>
<div style="left:948px;top:647.57px;width:98px;height:11px;line-height:11px;font-family:'Liberation Mono', monospace;font-size:11px;text-align:right;white-space:pre;color:#000;letter-spacing:0.8px;-webkit-text-stroke:0.1px #000">$0</div>
<div style="left:948px;top:661.57px;width:98px;height:11px;line-height:11px;font-family:'Liberation Mono', monospace;font-size:11px;text-align:right;white-space:pre;color:#000;letter-spacing:0.8px;-webkit-text-stroke:0.1px #000">$0</div>
<div style="left:950px;top:618.80px;width:20px;height:12px;line-height:12px;font-family:'Liberation Mono', monospace;font-size:12px;text-align:left;white-space:pre;color:#000;-webkit-text-stroke:0.1px #000">–</div>
<div style="left:950px;top:646.80px;width:20px;height:12px;line-height:12px;font-family:'Liberation Mono', monospace;font-size:12px;text-align:left;white-space:pre;color:#000;-webkit-text-stroke:0.1px #000">–</div>
<div style="left:848px;top:682px;width:199px;height:19px;background:#ffff00"></div>
<div style="left:848px;top:716px;width:199px;height:13px;background:#f6f6fb"></div>
<div style="left:848px;top:744px;width:199px;height:13px;background:#f6f6fb"></div>
<div style="left:848px;top:758px;width:199px;height:13px;background:#f6f6fb"></div>
<div style="left:903px;top:774px;width:144px;height:25px;background:#ffff00"></div>
<div style="left:847px;top:681px;width:201px;height:1px;background:#000"></div>
<div style="left:847px;top:701px;width:201px;height:1px;background:#000"></div>
<div style="left:847px;top:715px;width:201px;height:1px;background:#000"></div>
<div style="left:847px;top:729px;width:201px;height:1px;background:#000"></div>
<div style="left:847px;top:743px;width:201px;height:1px;background:#000"></div>
<div style="left:847px;top:757px;width:201px;height:1px;background:#000"></div>
<div style="left:847px;top:771px;width:201px;height:1px;background:#000"></div>
<div style="left:847px;top:799px;width:201px;height:1px;background:#000"></div>
<div style="left:948px;top:742px;width:100px;height:3px;background:#000"></div>
<div style="left:902px;top:771px;width:146px;height:3px;background:#000"></div>
<div style="left:847px;top:681px;width:1px;height:119px;background:#000"></div>
<div style="left:1047px;top:681px;width:1px;height:119px;background:#000"></div>
<div style="left:946px;top:701px;width:2px;height:71px;background:#000"></div>
<div style="left:902px;top:771px;width:1px;height:29px;background:#000"></div>
<div style="left:847px;top:686.80px;width:201px;height:12px;line-height:12px;font-family:'Liberation Mono', monospace;font-size:12px;text-align:center;white-space:pre;color:#000;font-weight:bold;letter-spacing:1.4px">PARCEL SUMMARY</div>
<div style="left:849px;top:703.72px;width:200px;height:9.5px;line-height:9.5px;font-family:'Liberation Mono', monospace;font-size:9.5px;text-align:left;white-space:pre;color:#000;-webkit-text-stroke:0.25px #000">TOTAL BLDG VALUE</div>
<div style="left:849px;top:717.72px;width:200px;height:9.5px;line-height:9.5px;font-family:'Liberation Mono', monospace;font-size:9.5px;text-align:left;white-space:pre;color:#000;-webkit-text-stroke:0.25px #000">OBLDG VALUE</div>
<div style="left:849px;top:731.72px;width:200px;height:9.5px;line-height:9.5px;font-family:'Liberation Mono', monospace;font-size:9.5px;text-align:left;white-space:pre;color:#000;-webkit-text-stroke:0.25px #000">LAND VALUE</div>
<div style="left:849px;top:745.72px;width:200px;height:9.5px;line-height:9.5px;font-family:'Liberation Mono', monospace;font-size:9.5px;text-align:left;white-space:pre;color:#000;-webkit-text-stroke:0.25px #000">APPRAISED VALUE</div>
<div style="left:849px;top:759.72px;width:200px;height:9.5px;line-height:9.5px;font-family:'Liberation Mono', monospace;font-size:9.5px;text-align:left;white-space:pre;color:#000;-webkit-text-stroke:0.25px #000">DEFERRED VALUE</div>
<div style="left:948px;top:704.57px;width:98px;height:11px;line-height:11px;font-family:'Liberation Mono', monospace;font-size:11px;text-align:right;white-space:pre;color:#000;letter-spacing:0.8px;-webkit-text-stroke:0.1px #000">$0</div>
<div style="left:948px;top:718.57px;width:98px;height:11px;line-height:11px;font-family:'Liberation Mono', monospace;font-size:11px;text-align:right;white-space:pre;color:#000;letter-spacing:0.8px;-webkit-text-stroke:0.1px #000">$0</div>
<div style="left:948px;top:732.57px;width:98px;height:11px;line-height:11px;font-family:'Liberation Mono', monospace;font-size:11px;text-align:right;white-space:pre;color:#000;letter-spacing:0.8px;-webkit-text-stroke:0.1px #000">$3,500</div>
<div style="left:948px;top:746.57px;width:98px;height:11px;line-height:11px;font-family:'Liberation Mono', monospace;font-size:11px;text-align:right;white-space:pre;color:#000;letter-spacing:0.8px;-webkit-text-stroke:0.1px #000">$3,500</div>
<div style="left:948px;top:760.57px;width:98px;height:11px;line-height:11px;font-family:'Liberation Mono', monospace;font-size:11px;text-align:right;white-space:pre;color:#000;letter-spacing:0.8px;-webkit-text-stroke:0.1px #000">$0</div>
<div style="left:949px;top:718.80px;width:21px;height:12px;line-height:12px;font-family:'Liberation Mono', monospace;font-size:12px;text-align:left;white-space:pre;color:#000;-webkit-text-stroke:0.1px #000">+</div>
<div style="left:949px;top:732.80px;width:21px;height:12px;line-height:12px;font-family:'Liberation Mono', monospace;font-size:12px;text-align:left;white-space:pre;color:#000;-webkit-text-stroke:0.1px #000">+</div>
<div style="left:950px;top:760.30px;width:20px;height:12px;line-height:12px;font-family:'Liberation Mono', monospace;font-size:12px;text-align:left;white-space:pre;color:#000;-webkit-text-stroke:0.1px #000">–</div>
<div style="left:847px;top:774.72px;width:56px;height:9.5px;line-height:9.5px;font-family:'Liberation Mono', monospace;font-size:9.5px;text-align:center;white-space:pre;color:#000;letter-spacing:0.4px;-webkit-text-stroke:0.25px #000">TAXABLE</div>
<div style="left:847px;top:784.72px;width:56px;height:9.5px;line-height:9.5px;font-family:'Liberation Mono', monospace;font-size:9.5px;text-align:center;white-space:pre;color:#000;letter-spacing:0.4px;-webkit-text-stroke:0.25px #000">VALUE</div>
<div style="left:903px;top:773.92px;width:144px;height:19px;line-height:19px;font-family:'Liberation Sans', sans-serif;font-size:19px;text-align:right;white-space:pre;color:#e00000;font-weight:bold;letter-spacing:0.6px">$3,500</div>
<div class="vt" style="left:37.5px;top:163px;font-size:26px;line-height:26px;-webkit-text-stroke:0.3px #f4fff4;transform-origin:0 0;transform:rotate(90deg)">STONEWALL</div>
<div class="vt" style="left:36px;top:585px;font-size:24.5px;line-height:24.5px;font-weight:bold;transform-origin:0 0;transform:rotate(90deg)">2023</div>
</div></body></html>
